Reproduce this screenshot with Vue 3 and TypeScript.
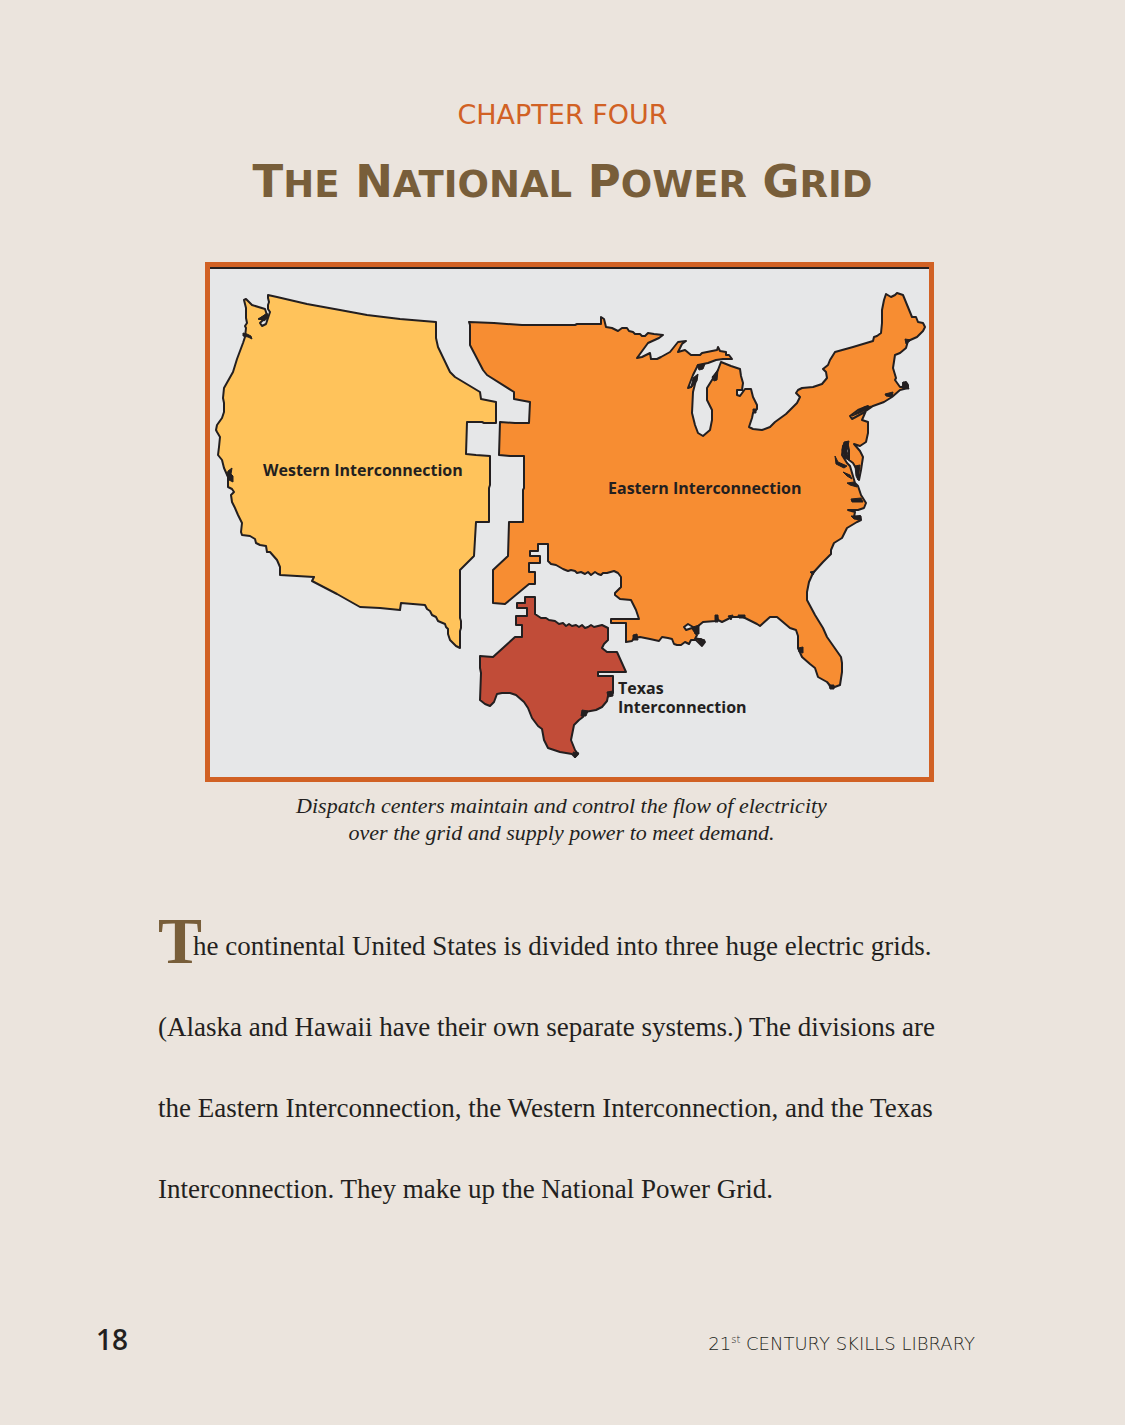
<script setup lang="ts">
const titleWords: string[] = ['The', 'National', 'Power', 'Grid']

const western =
  'M268 295L277 297L307 304L340 310L367 315L400 319L436 322V338L438 347L450 372L455 377L480 392L481 399L496 402V423L484 423L482 422L467 422L466 454L476 455L490 456V485L489 488V522H476L474 556L460 570V618L461 621V628L460 631V648L456 646L450 640L448 634V629L446 627L445 624L438 621L436 617L432 615L430 611L427 609L425 605L413 604L401 603L400 610L380 608L360 607L337 594L312 581L314 577L280 575V567L277 560L270 552H267L266 546L260 545L256 543L255 539L250 536L242 535L241 532L242 523L238 515L235 508L232 502L231 495L234 492L232 489L228 487V477L224 468L222 460L218 455L219 447L220 437L217 432L216 430L217 425L222 418L224 412V403L223 398L224 388L233 372L237 359L243 343L245 337L246 328L245 326L247 323L246 318V308L244 300L246 299L252 305L265 309L267 315L259 319L265 318L260 323L262 326L266 324L268 318L270 312L268 309V305L269 302L268 298Z'

const eastern =
  'M469 322L494 323L522 325H575L577 324L601 324V317L604 319L606 327L612 328L618 331L622 328L627 328L629 331L633 332L635 334L640 334L642 336L645 336L648 333L654 334L663 335L659 338L648 343L637 358L642 357L650 353L651 359H657L661 357L670 352L678 342L686 341L682 344L678 352L685 350L691 355H700L702 353L717 350L718 347L720 351L726 352V355L729 355L732 359H723L716 360L708 363L698 365L693 375L688 388L691 387L697 376L693 392L692 413L695 425L698 433L703 436L710 430L712 420V410L707 400V388L712 380L718 370L721 362L731 366L740 369L741 376L743 383L742 390L737 390L737 395L740 396L745 389H751L753 397L757 405V409L753 413L752 418L749 427L753 429L762 430L770 427L775 422L786 414L797 403L800 397L796 393L798 390L802 388L813 387L822 384L827 378L826 372L823 369L828 365L830 360L835 352L853 347L873 341L874 337L877 336L881 333L882 323V310L884 300L886 294L891 297L895 295L897 293L903 295L912 317L916 317L918 322L923 323L925 327L923 331L917 337L908 341L906 348L900 353L895 355L893 368L896 378L895 380L900 387L906 387L903 383L906 382L908 385V388L900 390L892 397L884 402L873 406L863 413L852 419L850 416L858 410L868 406L862 420L868 422V433L866 442L860 446L854 444L860 451L863 457L861 470L859 480L857 470L853 463L849 460V450L847 442L843 446L842 455L847 463L850 466L855 483L858 486L861 495L866 503L864 508L858 510L848 510L855 512L854 517L860 516L861 520L857 522L847 528L842 538L834 543L831 550V554L823 562L813 573L809 582L807 592V600L815 615L823 628L827 637L841 657L842 663V672L840 685L832 688L827 682L818 677L815 668L810 664L802 657L798 648V636L796 630L790 628L777 617H770L760 626L757 624L743 617H732L722 622L718 620L717 616L716 621L703 622L697 627L695 630L693 627L688 624L684 627L686 630L692 628L697 635L695 639L701 639L705 642L702 646L696 640H691L689 644L685 642L681 645H677L674 644L672 639L668 638L662 637L659 641L650 639L640 637L634 638L632 641L626 642V623H611V619H639L636 610L631 600L620 599L615 595V593L621 587V577L618 573L614 571L607 573L603 573L601 575L598 574L595 572L591 575L588 572L585 574L581 572L577 573L575 571L571 570L568 571L563 569L556 565L551 564L548 561V544H538V551H530V556H540V563H529V572H535V584H529L505 604L493 603V570L508 556L509 522H523V490L524 488V456L510 456L499 455L500 422L515 423H529L530 402L514 399L514 392L487 375L483 370L471 347L470 345V325Z'

const texas =
  'M535 597H525V603H517V608H527V616H516V625H522V637H515L493 657L480 656V668L481 673L480 700L485 704L490 706L494 702L497 694L502 693H510L516 695L524 702L528 708L532 718L538 726L542 729L544 740L548 748L560 752L572 754L575 757L578 754L575 750L571 740L574 725L579 720L583 717L585 712L596 710L602 707L607 701L608 696L613 693V676H598V672H626L617 652L607 652L602 648L604 644L608 640V628L602 625L598 626L594 627L591 625L588 627L585 628L582 625L579 627L576 625L572 626L569 624L566 626L563 623L559 624L555 621L549 620L546 618L541 618L538 616L535 614Z'

/* Narrow inlets, bays and barrier islands that read as solid ink at this scale */
const inlets =
  'M243 333L247 334L251 336L252 339L248 337L243 336ZM260 318L267 313L268 318L264 321ZM228 471L232 468L231 474L233 476V482L229 480L227 475ZM697 365L705 364L703 369L699 370ZM693 378L698 374L697 381L691 388ZM712 377L718 370L717 380L714 381ZM885 394L893 392L892 397L886 396ZM903 382L907 383L909 389L902 388ZM852 416L864 407L873 406L862 412ZM844 442L849 441L847 451L849 460L844 458L842 450ZM835 456L838 462L847 466L844 468L836 464ZM843 472L850 475L852 479L847 476ZM847 483L854 482L857 487L850 485ZM851 499L861 498L863 502L852 502ZM851 516L861 516V520L854 519ZM855 466L860 465L858 480L856 476ZM798 648L803 647L803 653L799 652ZM829 685H834V689H830ZM693 627L699 625V634L695 634ZM697 638L705 640L702 646ZM633 635L637 634L638 640L633 640ZM728 616L733 615L731 620ZM738 615H745V618H739ZM715 615H718V622H715ZM607 692L613 691V696L608 697ZM582 710L588 711L586 716L581 716ZM573 752L579 753L575 758ZM810 572L815 571L813 575ZM753 409H756V413H753ZM905 339L911 340L906 344Z'
</script>

<template>
  <main class="page">
    <header class="heading">
      <p class="chapter">CHAPTER FOUR</p>
      <h1 class="title">
        <template v-for="(word, i) in titleWords" :key="word"
          ><span class="initial">{{ (i > 0 ? ' ' : '') + word.charAt(0) }}</span
          >{{ word.slice(1) }}</template
        >
      </h1>
    </header>

    <figure class="figure">
      <svg class="map" viewBox="210 267 719 510" role="img" aria-label="Map of the three interconnections">
        <rect x="210" y="267" width="719" height="2" fill="#231f20" />
        <g stroke="#231f20" stroke-width="2" stroke-linejoin="round">
          <path :d="western" fill="#ffc35b" />
          <path :d="eastern" fill="#f78d32" />
          <path :d="texas" fill="#c14c38" />
          <path :d="inlets" fill="#231f20" stroke-width="1" />
        </g>
        <g class="labels">
          <text x="263" y="476">Western Interconnection</text>
          <text x="608" y="494">Eastern Interconnection</text>
          <text x="618" y="694">Texas</text>
          <text x="618" y="713">Interconnection</text>
        </g>
      </svg>
      <figcaption class="caption">
        Dispatch centers maintain and control the flow of electricity<br />
        over the grid and supply power to meet demand.
      </figcaption>
    </figure>

    <p class="body">
      <span class="dropcap">T</span>he continental United States is divided into three huge electric grids.<br />
      (Alaska and Hawaii have their own separate systems.) The divisions are<br />
      the Eastern Interconnection, the Western Interconnection, and the Texas<br />
      Interconnection. They make up the National Power Grid.
    </p>

    <footer class="footer">
      <span class="folio">18</span>
      <span class="series">21<sup>st</sup> CENTURY SKILLS LIBRARY</span>
    </footer>
  </main>
</template>

<style>
body {
  margin: 0;
  background: #ebe4dd;
}
</style>

<style scoped>
.page {
  box-sizing: border-box;
  min-height: 100vh;
  display: flex;
  flex-direction: column;
  padding: 100px 0 65px;
  background: #ebe4dd;
  color: #231f20;
}

.heading {
  text-align: center;
  font-family: 'DejaVu Sans', sans-serif;
}

.chapter {
  margin: 0;
  font-size: 27px;
  line-height: 30px;
  color: #d16124;
}

.title {
  margin: 26px 0 0;
  font-size: 37px;
  font-weight: 700;
  line-height: 52px;
  text-transform: uppercase;
  color: #785e3a;
}

.initial {
  font-size: 45px;
  line-height: 52px;
  white-space: pre-wrap;
}

.figure {
  margin: 51px 191px 0 205px;
}

.map {
  display: block;
  box-sizing: border-box;
  width: 100%;
  border: 5px solid #d16124;
  background: #e6e7e8;
}

.labels {
  font-family: 'Open Sans', sans-serif;
  font-size: 16px;
  font-weight: 700;
  fill: #231f20;
}

.caption {
  margin-top: 10px;
  padding-right: 16px;
  text-align: center;
  font-family: 'Liberation Serif', serif;
  font-size: 22px;
  font-style: italic;
  line-height: 27px;
}

.body {
  margin: 60px 158px 0;
  font-family: 'Liberation Serif', serif;
  font-size: 27px;
  line-height: 81px;
}

.dropcap {
  margin-right: -9px;
  font-size: 66px;
  font-weight: 700;
  line-height: 0;
  vertical-align: -8px;
  color: #785e3a;
}

.footer {
  display: flex;
  justify-content: space-between;
  align-items: baseline;
  margin-top: auto;
  padding: 0 150px 0 96px;
  font-family: 'Open Sans', sans-serif;
}

.folio {
  font-size: 28px;
  font-weight: 600;
  line-height: 32px;
}

.series {
  font-family: 'DejaVu Sans', sans-serif;
  font-size: 18px;
  font-weight: 200;
  line-height: 32px;
}

.series sup {
  font-size: 10px;
  line-height: 0;
}
</style>
